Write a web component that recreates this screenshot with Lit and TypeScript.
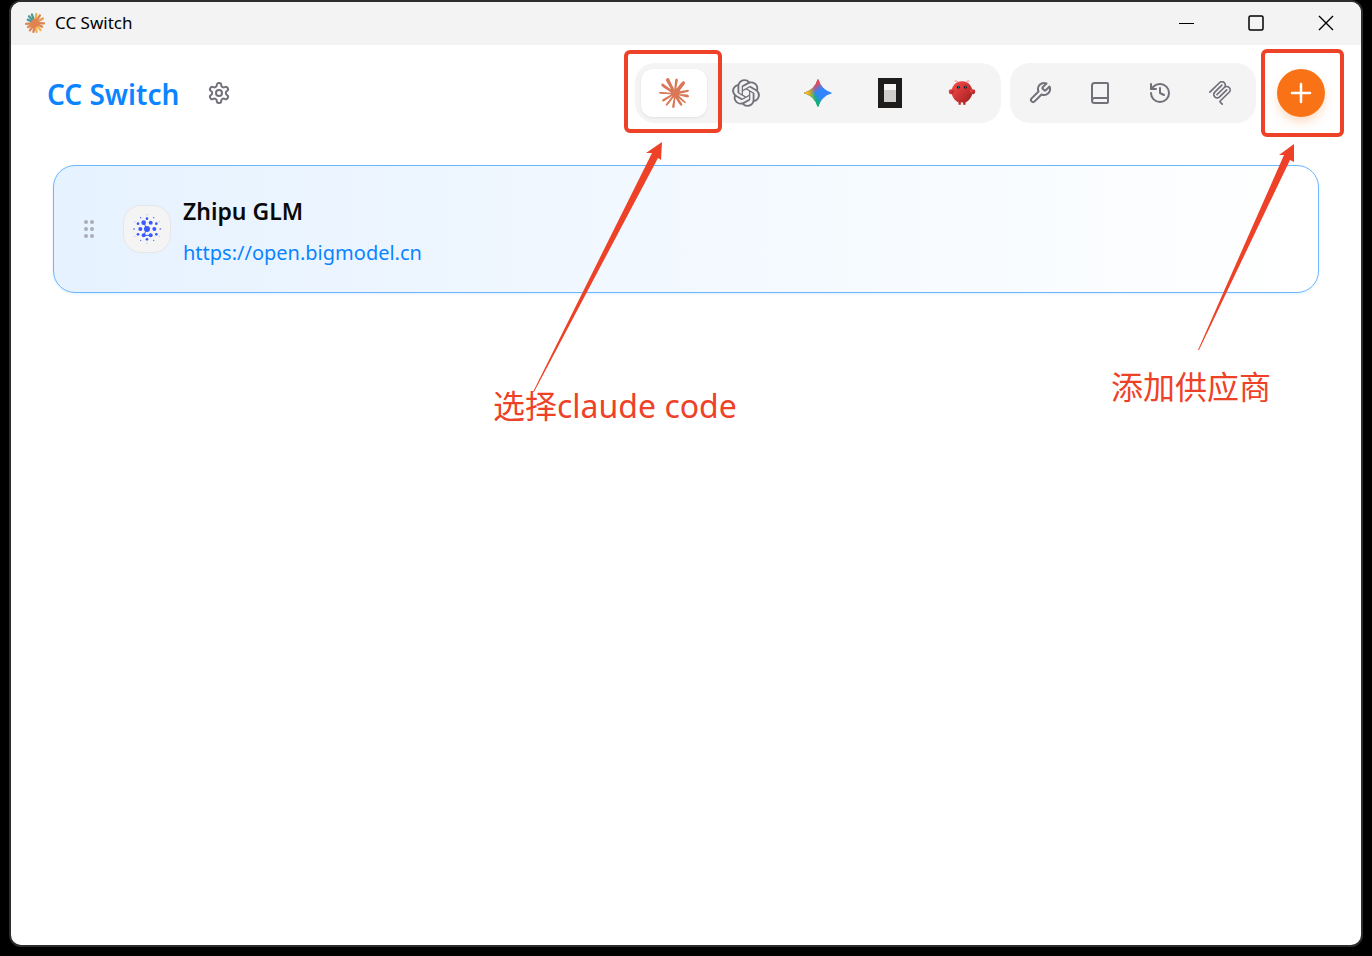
import { LitElement, html, svg, css } from "lit";
import { customElement, state } from "lit/decorators.js";

const claudePath =
  "M4.709 15.955l4.72-2.647.08-.23-.08-.128H9.2l-.79-.048-2.698-.073-2.339-.097-2.266-.122-.571-.121L0 11.784l.055-.352.48-.321.686.06 1.52.103 2.278.158 1.652.097 2.449.255h.389l.055-.157-.134-.098-.103-.097-2.358-1.596-2.552-1.688-1.336-.972-.724-.491-.364-.462-.158-1.008.656-.722.881.06.225.061.893.686 1.908 1.476 2.491 1.833.365.304.145-.103.019-.073-.164-.274-1.355-2.446-1.446-2.49-.644-1.032-.17-.619a2.97 2.97 0 01-.104-.729L6.283.134 6.696 0l.996.134.42.364.62 1.414 1.002 2.229 1.555 3.03.456.898.243.832.091.255h.158V9.01l.128-1.706.237-2.095.23-2.695.08-.76.376-.91.747-.492.584.28.48.685-.067.444-.286 1.851-.559 2.903-.364 1.942h.212l.243-.242.985-1.306 1.652-2.064.73-.82.85-.904.547-.431h1.033l.76 1.129-.34 1.166-1.064 1.347-.881 1.142-1.264 1.7-.79 1.36.073.11.188-.02 2.856-.606 1.543-.28 1.841-.315.833.388.091.395-.328.807-1.969.486-2.309.462-3.439.813-.042.03.049.061 1.549.146.662.036h1.622l3.02.225.79.522.474.638-.079.485-1.215.62-1.64-.389-3.829-.91-1.312-.329h-.182v.11l1.093 1.068 2.006 1.81 2.509 2.33.127.578-.322.455-.34-.049-2.205-1.657-.851-.747-1.926-1.62h-.128v.17l.444.649 2.345 3.521.122 1.08-.17.353-.608.213-.668-.122-1.374-1.925-1.415-2.167-1.143-1.943-.14.08-.674 7.254-.316.37-.729.28-.607-.461-.322-.747.322-1.476.389-1.924.315-1.53.286-1.9.17-.632-.012-.042-.14.018-1.434 1.967-2.18 2.945-1.726 1.845-.414.164-.717-.37.067-.662.401-.589 2.388-3.036 1.44-1.882.93-1.086-.006-.158h-.055L4.132 18.56l-1.13.146-.487-.456.061-.746.231-.243 1.908-1.312-.006.006z";
const openaiPath =
  "M21.55 10.004a5.416 5.416 0 00-.478-4.501c-1.217-2.09-3.662-3.166-6.05-2.66A5.59 5.59 0 0010.831 1C8.39.995 6.224 2.546 5.473 4.838A5.553 5.553 0 001.76 7.496a5.487 5.487 0 00.691 6.5 5.416 5.416 0 00.477 4.502c1.217 2.09 3.662 3.165 6.05 2.66A5.586 5.586 0 0013.168 23c2.443.006 4.61-1.546 5.361-3.84a5.553 5.553 0 003.715-2.66 5.488 5.488 0 00-.693-6.497v.001zm-8.381 11.558a4.199 4.199 0 01-2.675-.954c.034-.018.093-.05.132-.074l4.44-2.53a.71.71 0 00.364-.623v-6.176l1.877 1.069c.02.01.033.029.036.05v5.115c-.003 2.274-1.87 4.118-4.174 4.123zM4.192 17.78a4.059 4.059 0 01-.498-2.763c.032.02.09.055.131.078l4.44 2.53c.225.13.504.13.73 0l5.42-3.088v2.138a.068.068 0 01-.027.057L9.9 19.288c-1.999 1.136-4.552.46-5.707-1.51h-.001zM3.023 8.216A4.15 4.15 0 015.198 6.41l-.002.151v5.06a.711.711 0 00.364.624l5.42 3.087-1.876 1.07a.067.067 0 01-.063.005l-4.489-2.559c-1.995-1.14-2.679-3.658-1.53-5.63h.001zm15.417 3.54l-5.42-3.088L14.896 7.6a.067.067 0 01.063-.006l4.489 2.557c1.998 1.14 2.683 3.662 1.529 5.633a4.163 4.163 0 01-2.174 1.807V12.38a.71.71 0 00-.363-.623zm1.867-2.773a6.04 6.04 0 00-.132-.078l-4.44-2.53a.731.731 0 00-.729 0l-5.42 3.088V7.325a.068.068 0 01.027-.057L14.1 4.713c2-1.137 4.555-.46 5.707 1.513.487.833.664 1.809.499 2.757h.001zm-11.741 3.81l-1.877-1.068a.065.065 0 01-.036-.051V6.559c.001-2.277 1.873-4.122 4.181-4.12.976 0 1.92.338 2.671.954-.034.018-.092.05-.131.073l-4.44 2.53a.71.71 0 00-.365.623l-.003 6.173v.002zm1.02-2.168L12 9.25l2.414 1.375v2.75L12 14.75l-2.415-1.375v-2.75z";
const geminiPath =
  "M20.616 10.835a14.147 14.147 0 01-4.45-3.001 14.111 14.111 0 01-3.678-6.452.503.503 0 00-.975 0 14.134 14.134 0 01-3.679 6.452 14.155 14.155 0 01-4.45 3.001c-.65.28-1.318.505-2.002.678a.502.502 0 000 .975c.684.172 1.35.397 2.002.677a14.147 14.147 0 014.45 3.001 14.112 14.112 0 013.679 6.453.502.502 0 00.975 0c.172-.685.397-1.351.677-2.003a14.145 14.145 0 013.001-4.45 14.113 14.113 0 016.453-3.678.503.503 0 000-.975 13.245 13.245 0 01-2.003-.678z";
const gearPath =
  "M12.22 2h-.44a2 2 0 0 0-2 2v.18a2 2 0 0 1-1 1.73l-.43.25a2 2 0 0 1-2 0l-.15-.08a2 2 0 0 0-2.73.73l-.22.38a2 2 0 0 0 .73 2.73l.15.1a2 2 0 0 1 1 1.72v.51a2 2 0 0 1-1 1.74l-.15.09a2 2 0 0 0-.73 2.73l.22.38a2 2 0 0 0 2.73.73l.15-.08a2 2 0 0 1 2 0l.43.25a2 2 0 0 1 1 1.73V20a2 2 0 0 0 2 2h.44a2 2 0 0 0 2-2v-.18a2 2 0 0 1 1-1.73l.43-.25a2 2 0 0 1 2 0l.15.08a2 2 0 0 0 2.73-.73l.22-.39a2 2 0 0 0-.73-2.73l-.15-.08a2 2 0 0 1-1-1.74v-.5a2 2 0 0 1 1-1.74l.15-.09a2 2 0 0 0 .73-2.73l-.22-.38a2 2 0 0 0-2.73-.73l-.15.08a2 2 0 0 1-2 0l-.43-.25a2 2 0 0 1-1-1.73V4a2 2 0 0 0-2-2z";

// Rays of the title bar mark: angle in degrees, length, colour.
const rays: [number, number, string][] = [
  [2, 10, "#dd8452"], [28, 9, "#dd8452"], [52, 10, "#f0b04c"], [80, 10, "#f0b04c"],
  [100, 10, "#dd8452"], [125, 10, "#dd8452"], [150, 9, "#dd8452"], [175, 10, "#dd8452"],
  [205, 9, "#4e9a9b"], [228, 10, "#4e9a9b"], [250, 10, "#4e9a9b"], [278, 10, "#f0b04c"],
  [303, 10, "#dd8452"], [330, 10, "#e8984f"],
];

// Dots of the Zhipu mark: x, y, radius, opacity.
const dots: [number, number, number, number][] = [
  [0, 0, 9, 1], [-20, 0, 6, 1], [-10, -19, 7, 1], [11, -19, 6, 1], [22, 0, 6, 1], [11, 19, 6, 1], [-10, 19, 6, 1],
  [0, -31, 4, 1], [0, 31, 4, 1], [-27, -16, 4, 1], [28, -16, 4, 1], [-27, 16, 4, 1], [28, 16, 4, 1],
  [-19, -34, 2, 1], [20, -34, 2, 1], [-19, 34, 2, 1], [20, 34, 2, 1],
  [-39, 0, 3, 0.6], [40, 0, 3, 0.6], [0, -43, 2, 0.35], [0, 43, 2, 0.35],
  [-37, -22, 2, 0.3], [37, -22, 2, 0.3], [-37, 22, 2, 0.3], [37, 22, 2, 0.3],
];

const icons = {
  mark: html`<svg width="20" height="20" viewBox="-10 -10 20 20" stroke-width="2.3" stroke-linecap="round" aria-hidden="true">
    ${rays.map(([a, l, c]) => svg`<path d="M0 0H${l - 1}" transform="rotate(${a})" stroke=${c} />`)}
    <circle r="4" fill="#dd8452" />
  </svg>`,
  claude: html`<svg width="30" height="30" viewBox="0 0 24 24" fill="#d97757" aria-hidden="true"><path d=${claudePath} /></svg>`,
  codex: html`<svg width="30" height="30" viewBox="0 0 24 24" fill="#71717a" aria-hidden="true"><path d=${openaiPath} /></svg>`,
  gemini: html`<svg width="30" height="30" viewBox="0 0 24 24" aria-hidden="true">
    <defs>
      <linearGradient id="g-green" gradientUnits="userSpaceOnUse" x1="7" y1="15.5" x2="11" y2="12">
        <stop stop-color="#08b962" /><stop offset="1" stop-color="#08b962" stop-opacity="0" />
      </linearGradient>
      <linearGradient id="g-red" gradientUnits="userSpaceOnUse" x1="8" y1="5.5" x2="11.5" y2="11">
        <stop stop-color="#f94543" /><stop offset="1" stop-color="#f94543" stop-opacity="0" />
      </linearGradient>
      <linearGradient id="g-yellow" gradientUnits="userSpaceOnUse" x1="3.5" y1="13.5" x2="17.5" y2="12">
        <stop stop-color="#fabc12" /><stop offset=".46" stop-color="#fabc12" stop-opacity="0" />
      </linearGradient>
    </defs>
    <path d=${geminiPath} fill="#3186ff" />
    <path d=${geminiPath} fill="url(#g-green)" />
    <path d=${geminiPath} fill="url(#g-red)" />
    <path d=${geminiPath} fill="url(#g-yellow)" />
  </svg>`,
  opencode: html`<svg width="24" height="30" viewBox="0 0 24 30" aria-hidden="true">
    <path d="M0 0h24v30H0z" fill="#1f1d1b" /><path d="M6 6h12v6H6z" fill="#f5f5f5" /><path d="M6 12h12v12H6z" fill="#cfcecd" />
  </svg>`,
  openclaw: html`<svg width="28" height="28" viewBox="0 0 120 120" aria-hidden="true">
    <defs><linearGradient id="claw" x1="0" y1="0" x2="1" y2="1"><stop stop-color="#ff4d4d" /><stop offset="1" stop-color="#991b1b" /></linearGradient></defs>
    <path fill="url(#claw)" d="M60 10C30 10 15 35 15 55C15 75 30 95 45 100L45 110L55 110L55 100C55 100 60 102 65 100L65 110L75 110L75 100C90 95 105 75 105 55C105 35 90 10 60 10Z" />
    <path fill="url(#claw)" d="M20 45C5 40 0 50 5 60C10 70 20 65 25 55C28 48 25 45 20 45Z" />
    <path fill="url(#claw)" d="M100 45C115 40 120 50 115 60C110 70 100 65 95 55C92 48 95 45 100 45Z" />
    <path d="M45 15Q35 5 30 8M75 15Q85 5 90 8" fill="none" stroke="#ff4d4d" stroke-width="3" stroke-linecap="round" />
    <circle cx="45" cy="35" r="6" fill="#050810" /><circle cx="75" cy="35" r="6" fill="#050810" />
    <circle cx="46" cy="34" r="3" fill="#00e5cc" /><circle cx="76" cy="34" r="3" fill="#00e5cc" />
  </svg>`,
  mcp: html`<svg width="24" height="24" viewBox="0 0 24 24" fill="currentColor" aria-hidden="true">
    <path d="M15.688 2.343a2.588 2.588 0 00-3.61 0l-9.626 9.44a.863.863 0 01-1.203 0 .823.823 0 010-1.18l9.626-9.44a4.313 4.313 0 016.016 0 4.116 4.116 0 011.204 3.54 4.3 4.3 0 013.609 1.18l.05.05a4.115 4.115 0 010 5.9l-8.706 8.537a.274.274 0 000 .393l1.788 1.754a.823.823 0 010 1.18.863.863 0 01-1.203 0l-1.788-1.753a1.92 1.92 0 010-2.754l8.706-8.538a2.47 2.47 0 000-3.54l-.05-.049a2.588 2.588 0 00-3.607-.003l-7.172 7.034-.002.002-.098.097a.863.863 0 01-1.204 0 .823.823 0 010-1.18l7.273-7.133a2.47 2.47 0 00-.003-3.537z" />
    <path d="M14.485 4.703a.823.823 0 000-1.18.863.863 0 00-1.204 0l-7.119 6.982a4.115 4.115 0 000 5.9 4.314 4.314 0 006.016 0l7.12-6.982a.823.823 0 000-1.18.863.863 0 00-1.204 0l-7.119 6.982a2.588 2.588 0 01-3.61 0 2.47 2.47 0 010-3.54l7.12-6.982z" />
  </svg>`,
  zhipu: html`<svg width="30" height="30" viewBox="-45 -45 90 90" fill="#3859ff" aria-hidden="true">
    ${dots.map(([x, y, r, o]) => svg`<circle cx=${x} cy=${y} r=${r} opacity=${o} />`)}
    <path d="M-10 -19L0 0L-10 19H11" fill="none" stroke="#3859ff" stroke-width="3" />
  </svg>`,
  grip: html`<svg width="24" height="24" viewBox="0 0 24 24" fill="#a9adb8" aria-hidden="true">
    ${[5, 12, 19].map((y) => svg`<circle cx="8" cy=${y} r="2" /><circle cx="14" cy=${y} r="2" />`)}
  </svg>`,
};

const line = (...paths: string[]) => html`<svg width="24" height="24" viewBox="0 0 24 24" fill="none" stroke="currentColor" stroke-width="2" stroke-linecap="round" stroke-linejoin="round" aria-hidden="true">
  ${paths.map((d) => svg`<path d=${d} />`)}
</svg>`;

const apps = [
  { id: "claude", label: "Claude", icon: icons.claude },
  { id: "codex", label: "Codex", icon: icons.codex },
  { id: "gemini", label: "Gemini", icon: icons.gemini },
  { id: "opencode", label: "OpenCode", icon: icons.opencode },
  { id: "openclaw", label: "OpenClaw", icon: icons.openclaw },
];

const tools = [
  { label: "Skills", icon: line("M14.7 6.3a1 1 0 0 0 0 1.4l1.6 1.6a1 1 0 0 0 1.4 0l3.77-3.77a6 6 0 0 1-7.94 7.94l-6.91 6.91a2.12 2.12 0 0 1-3-3l6.91-6.91a6 6 0 0 1 7.94-7.94l-3.76 3.76z") },
  { label: "Prompts", icon: line("M4 19.5v-15A2.5 2.5 0 0 1 6.5 2H19a1 1 0 0 1 1 1v18a1 1 0 0 1-1 1H6.5a1 1 0 0 1 0-5H20") },
  { label: "Sessions", icon: line("M3 12a9 9 0 1 0 9-9 9.75 9.75 0 0 0-6.74 2.74L3 8", "M3 3v5h5", "M12 7v5l4 2") },
  { label: "MCP", icon: icons.mcp },
];

@customElement("app-root")
export class AppRoot extends LitElement {
  @state() private active = "claude";

  static styles = css`
    :host {
      display: flex;
      min-height: 100vh;
      box-sizing: border-box;
      padding: 0 9px 9px;
      background: #000;
      color: #09090b;
      font-family: "Noto Sans", "Noto Sans CJK SC", sans-serif;
    }
    * { box-sizing: border-box; }
    svg { display: block; flex: none; }
    button {
      display: flex;
      align-items: center;
      justify-content: center;
      margin: 0;
      padding: 0;
      border: 0;
      background: none;
      color: inherit;
      cursor: pointer;
    }
    .window {
      flex: 1;
      min-width: 0;
      border: 2px solid #2d2d2d;
      border-radius: 12px;
      background: #fff;
    }
    .titlebar {
      display: flex;
      align-items: center;
      gap: 10px;
      height: 43px;
      padding: 0 0 2px 14px;
      border-radius: 10px 10px 0 0;
      background: #f3f3f3;
      font-size: 17px;
      line-height: 24px;
      color: #000;
    }
    .caption { flex: 1; }
    .controls { display: flex; align-self: stretch; }
    .controls button { width: 70px; }
    .header {
      display: flex;
      align-items: center;
      gap: 9px;
      height: 96px;
      padding: 0 36px;
    }
    .brand { display: flex; flex: 1; align-items: center; gap: 16px; }
    h1 { margin: 0; padding-top: 2px; font-size: 28px; line-height: 42px; font-weight: 600; color: #0a84ff; }
    .settings, .tools button { width: 48px; height: 48px; color: #71717a; }
    .apps, .tools {
      display: flex;
      padding: 6px;
      border-radius: 20px;
      background: #f4f4f4;
    }
    .apps { gap: 6px; }
    .tools { gap: 12px; padding-right: 12px; }
    .apps button { width: 66px; height: 48px; border-radius: 12px; }
    .apps button.active { background: #fff; box-shadow: 0 1px 3px rgb(0 0 0 / 8%); }
    .target { position: relative; display: flex; }
    .target.add { margin-left: 12px; }
    .plus {
      width: 48px;
      height: 48px;
      border-radius: 50%;
      background: #f97316;
      color: #fff;
      box-shadow: 0 6px 12px -2px rgb(249 115 22 / 30%);
    }
    .frame, .arrow, .note { position: absolute; z-index: 2; pointer-events: none; }
    .frame { border: 4px solid #ee4228; border-radius: 6px; }
    .arrow { fill: #ee4228; overflow: visible; }
    .note { color: #ee4228; font-size: 32px; line-height: 40px; white-space: nowrap; }
    .target.pick .frame { inset: -19px -15px -16px -17px; }
    .target.pick .arrow { left: -108px; top: 73px; }
    .target.pick .note { left: -148px; top: 317px; }
    .target.add .frame { inset: -20px -19px -20px -16px; }
    .target.add .arrow { left: -79px; top: 75px; }
    .target.add .note { left: -166px; top: 298px; }
    .list { margin: 0; padding: 24px 42px; list-style: none; }
    .card {
      display: flex;
      align-items: center;
      gap: 12px;
      padding: 23px 24px;
      border: 1px solid #6cb5ff;
      border-radius: 22px;
      background: linear-gradient(90deg, #e6f2ff, #fff);
      box-shadow: 0 1px 3px rgb(10 132 255 / 12%);
    }
    .grip { width: 24px; height: 36px; cursor: grab; }
    .logo {
      display: flex;
      align-items: center;
      justify-content: center;
      width: 48px;
      height: 48px;
      margin-left: 9px;
      border: 1px solid #e6e6e8;
      border-radius: 18px;
      background: #f4f4f5;
    }
    .info { display: flex; flex-direction: column; align-items: flex-start; gap: 10px; padding-top: 6px; }
    h2 { margin: 0; font-size: 23px; line-height: 32px; font-weight: 600; color: #09090b; }
    a { font-size: 20px; line-height: 32px; color: #0a84ff; text-decoration: none; }
  `;

  private appButton(app: (typeof apps)[number]) {
    return html`<button
      class=${this.active === app.id ? "active" : ""}
      aria-label=${app.label}
      aria-pressed=${this.active === app.id}
      @click=${() => (this.active = app.id)}
    >${app.icon}</button>`;
  }

  render() {
    return html`
      <div class="window">
        <div class="titlebar">
          ${icons.mark}
          <span class="caption">CC Switch</span>
          <div class="controls">
            <button aria-label="Minimize"><svg width="16" height="16" viewBox="0 0 16 16" stroke="#000"><path d="M1 8.5H16" /></svg></button>
            <button aria-label="Maximize"><svg width="16" height="16" viewBox="0 0 16 16" fill="none" stroke="#000" stroke-width="1.5"><rect x="1" y="1" width="14" height="14" rx="1.5" /></svg></button>
            <button aria-label="Close"><svg width="16" height="16" viewBox="0 0 16 16" stroke="#000" stroke-width="1.4"><path d="M1 1l14 14M15 1L1 15" /></svg></button>
          </div>
        </div>
        <header class="header">
          <div class="brand">
            <h1>CC Switch</h1>
            <button class="settings" aria-label="Settings">${line(gearPath, "M15 12a3 3 0 1 1-6 0a3 3 0 0 1 6 0z")}</button>
          </div>
          <nav class="apps" aria-label="Apps">
            <div class="target pick">
              ${this.appButton(apps[0])}
              <span class="frame"></span>
              <svg class="arrow" width="129" height="251" viewBox="0 0 129 251" aria-hidden="true">
                <path d="M129 0L113 11L119 11L0 250L1 250L125 16L128 18z" />
              </svg>
              <span class="note">选择claude code</span>
            </div>
            ${apps.slice(1).map((app) => this.appButton(app))}
          </nav>
          <div class="tools">
            ${tools.map((tool) => html`<button aria-label=${tool.label}>${tool.icon}</button>`)}
          </div>
          <div class="target add">
            <button class="plus" aria-label="Add provider">
              <svg width="30" height="30" viewBox="0 0 30 30" stroke="currentColor" stroke-width="2.5" stroke-linecap="round" aria-hidden="true"><path d="M6 15h18M15 6v18" /></svg>
            </button>
            <span class="frame"></span>
            <svg class="arrow" width="96" height="207" viewBox="0 0 96 207" aria-hidden="true">
              <path d="M96 0L81 11L86 11L0 206L1 206L92 16L96 18z" />
            </svg>
            <span class="note">添加供应商</span>
          </div>
        </header>
        <main>
          <ul class="list">
            <li class="card">
              <button class="grip" aria-label="Drag to reorder">${icons.grip}</button>
              <div class="logo">${icons.zhipu}</div>
              <div class="info">
                <h2>Zhipu GLM</h2>
                <a href="https://open.bigmodel.cn">https://open.bigmodel.cn</a>
              </div>
            </li>
          </ul>
        </main>
      </div>
    `;
  }
}
